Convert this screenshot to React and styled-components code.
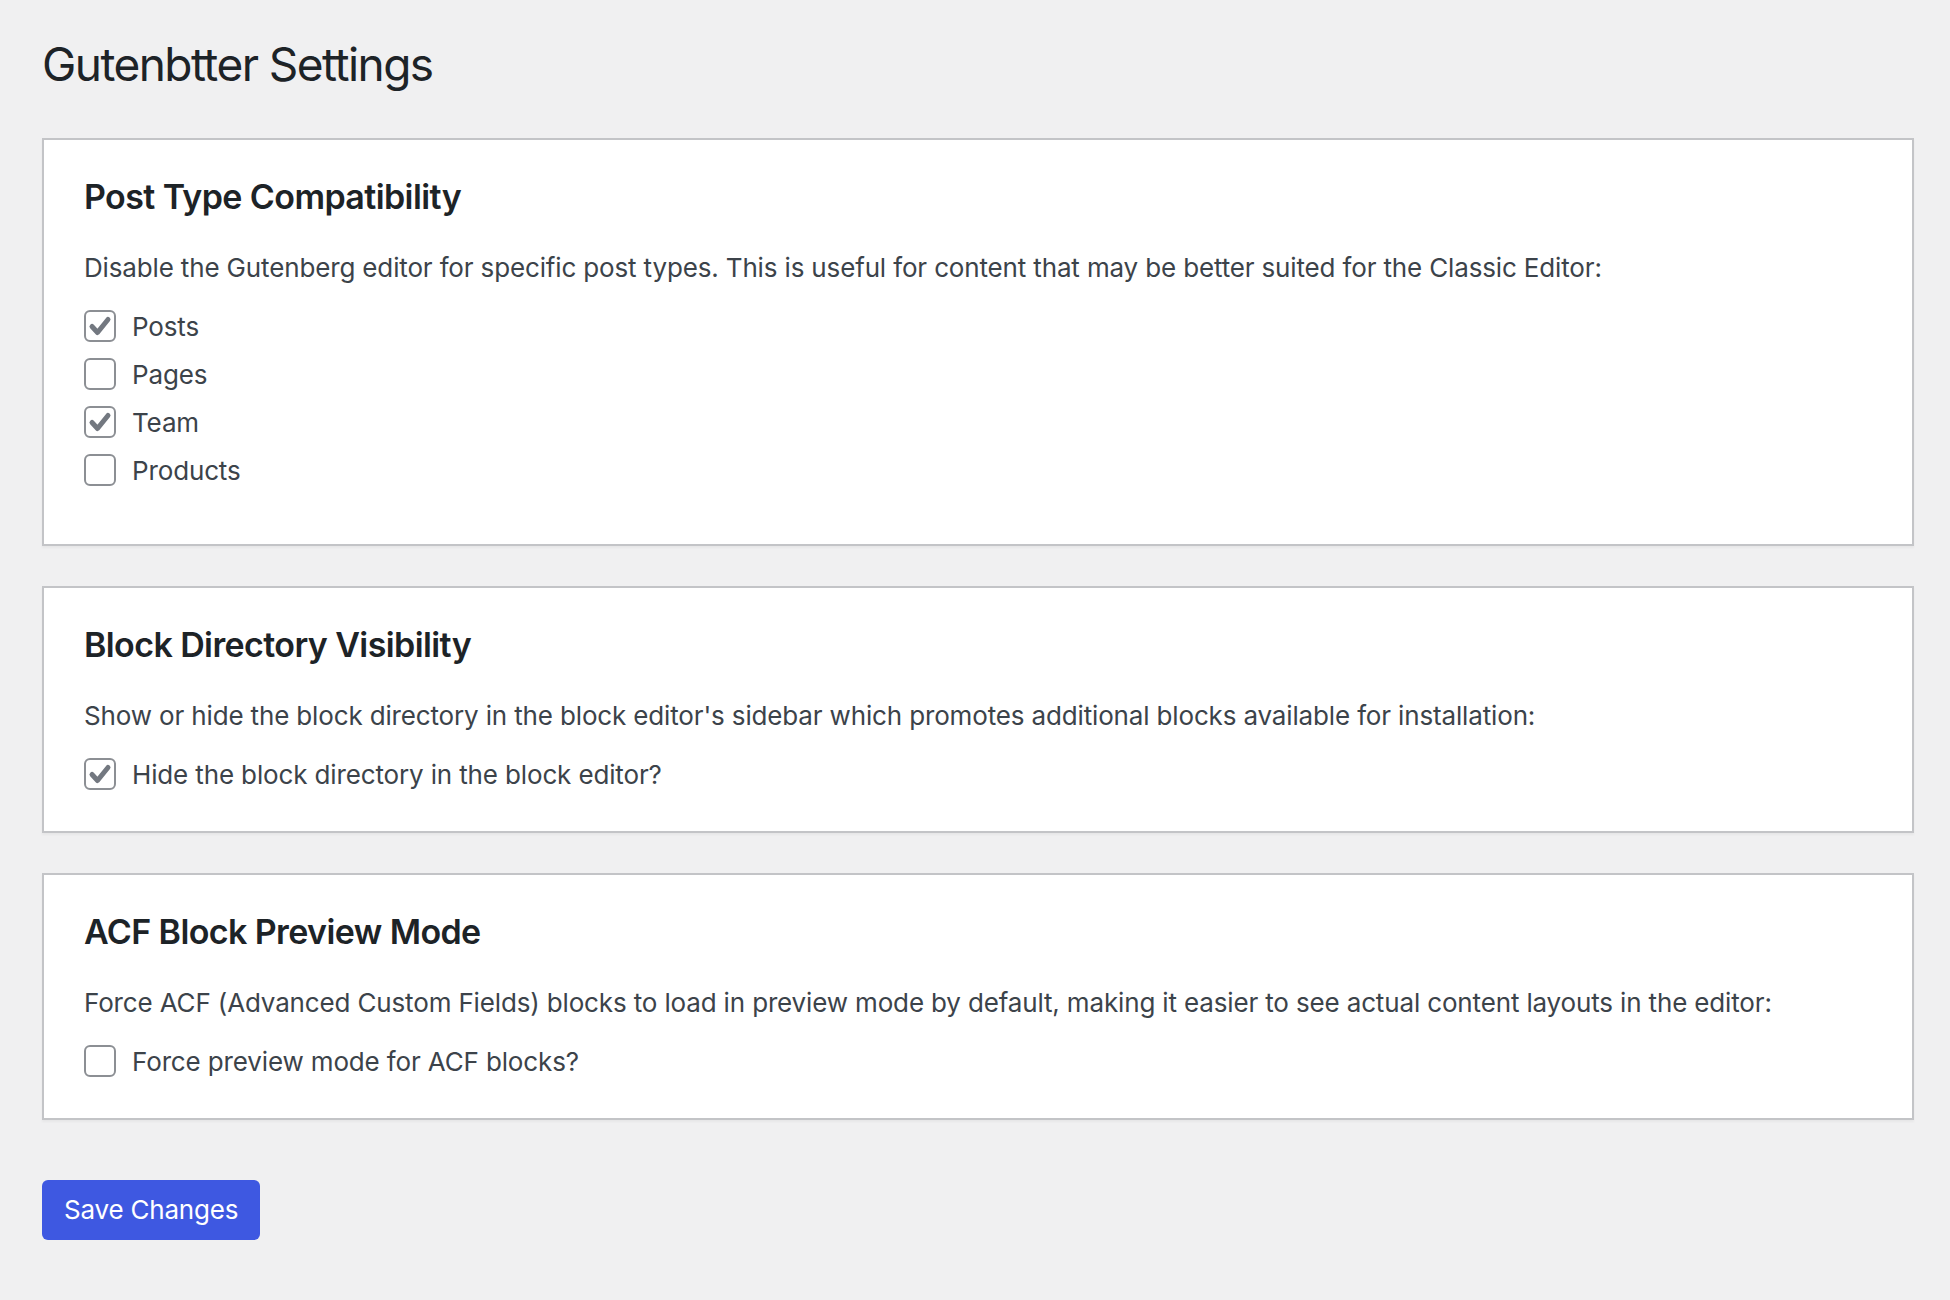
import React, { useState } from "react";
import styled, { createGlobalStyle } from "styled-components";

const GlobalStyle = createGlobalStyle`
  html, body { margin: 0; padding: 0; background: #f0f0f1; }
  body {
    font-family: Inter, "Noto Sans", "Liberation Sans", sans-serif;
    color: #3c434a;
    -webkit-font-smoothing: antialiased;
  }
  * { box-sizing: border-box; }
`;

const Page = styled.div`
  padding: 32px 36px 60px 42px;
  min-height: 1300px;
`;

const Title = styled.h1`
  margin: 0;
  font-size: 46px;
  line-height: 64px;
  font-weight: 400;
  color: #1d2327;
  letter-spacing: -1.55px;
`;

const Cards = styled.div`
  display: flex;
  flex-direction: column;
  gap: 40px;
  margin-top: 42px;
`;

const Card = styled.section`
  background: #fff;
  border: 2px solid #c3c4c7;
  box-shadow: 0 2px 2px rgba(0, 0, 0, 0.04);
  padding: 35px 40px ${(p) => p.$bottom}px 40px;
`;

const CardTitle = styled.h2`
  margin: 0;
  font-size: 34px;
  line-height: 44px;
  font-weight: 600;
  color: #1d2327;
  letter-spacing: -0.6px;
`;

const Description = styled.p`
  margin: 29px 0 0;
  font-size: 26px;
  line-height: 39px;
  color: #3c434a;
  letter-spacing: -0.15px;
`;

const Options = styled.div`
  display: flex;
  flex-direction: column;
  margin-top: 15px;
`;

const Row = styled.label`
  display: flex;
  align-items: center;
  gap: 16px;
  height: 48px;
  font-size: 26px;
  color: #3c434a;
  letter-spacing: -0.14px;
  cursor: pointer;
`;

const Box = styled.span`
  width: 32px;
  height: 32px;
  flex: none;
  border: 2px solid #8c8f94;
  border-radius: 6px;
  background: #fff;
  display: flex;
  align-items: center;
  justify-content: center;
`;

const SaveButton = styled.button`
  margin-top: 60px;
  height: 60px;
  padding: 0 22px;
  border: none;
  border-radius: 6px;
  background: #3e58e1;
  color: #fff;
  font-family: inherit;
  font-size: 26px;
  line-height: 60px;
  letter-spacing: -0.2px;
  cursor: pointer;
`;

const Check = () => (
  <svg width="28" height="28" viewBox="0 0 28 28" fill="none">
    <path
      d="M6 14.5 L11.5 20.5 L22 7.5"
      stroke="#737880"
      strokeWidth="5"
      strokeLinecap="round"
      strokeLinejoin="round"
    />
  </svg>
);

const Checkbox = ({ checked, onToggle, children }) => (
  <Row onClick={onToggle}>
    <Box>{checked && <Check />}</Box>
    <span>{children}</span>
  </Row>
);

const sections = [
  {
    id: "post",
    title: "Post Type Compatibility",
    desc:
      "Disable the Gutenberg editor for specific post types. This is useful for content that may be better suited for the Classic Editor:",
    options: [
      { id: "posts", label: "Posts", checked: true },
      { id: "pages", label: "Pages", checked: false },
      { id: "team", label: "Team", checked: true },
      { id: "products", label: "Products", checked: false },
    ],
    bottom: 50,
  },
  {
    id: "dir",
    title: "Block Directory Visibility",
    desc:
      "Show or hide the block directory in the block editor's sidebar which promotes additional blocks available for installation:",
    options: [{ id: "hide", label: "Hide the block directory in the block editor?", checked: true }],
    bottom: 33,
  },
  {
    id: "acf",
    title: "ACF Block Preview Mode",
    desc:
      "Force ACF (Advanced Custom Fields) blocks to load in preview mode by default, making it easier to see actual content layouts in the editor:",
    options: [{ id: "acf", label: "Force preview mode for ACF blocks?", checked: false }],
    bottom: 33,
  },
];

export default function App() {
  const initial = {};
  sections.forEach((s) => s.options.forEach((o) => (initial[o.id] = o.checked)));
  const [state, setState] = useState(initial);
  const toggle = (id) => setState((s) => ({ ...s, [id]: !s[id] }));

  return (
    <>
      <GlobalStyle />
      <Page>
        <Title>Gutenbtter Settings</Title>
        <Cards>
          {sections.map((s) => (
            <Card key={s.id} $bottom={s.bottom}>
              <CardTitle>{s.title}</CardTitle>
              <Description>{s.desc}</Description>
              <Options>
                {s.options.map((o) => (
                  <Checkbox key={o.id} checked={state[o.id]} onToggle={() => toggle(o.id)}>
                    {o.label}
                  </Checkbox>
                ))}
              </Options>
            </Card>
          ))}
        </Cards>
        <SaveButton>Save Changes</SaveButton>
      </Page>
    </>
  );
}
